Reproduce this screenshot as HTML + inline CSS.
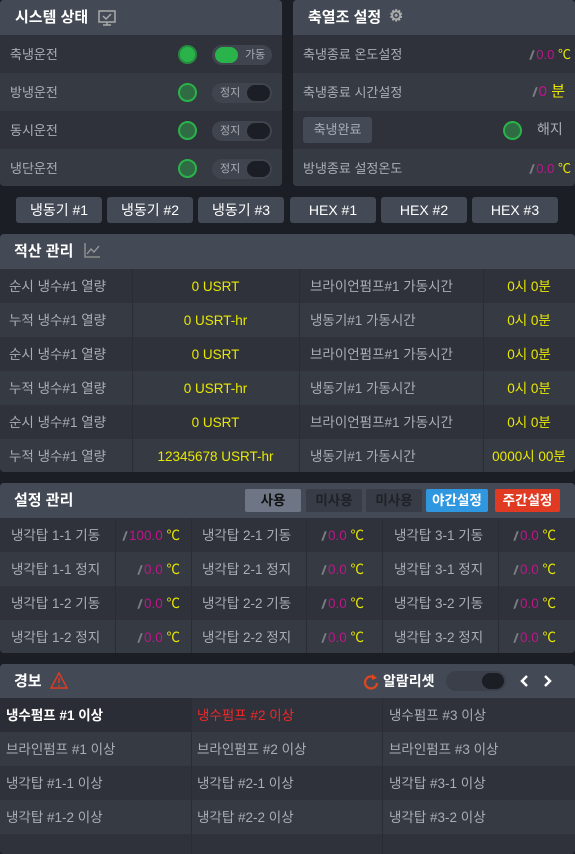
<!DOCTYPE html>
<html><head><meta charset="utf-8"><style>
*{margin:0;padding:0;box-sizing:border-box}
body{width:575px;height:846px;background:#1b1e25;font-family:"Liberation Sans","Noto Sans CJK KR",sans-serif;position:relative;overflow:hidden;color:#a9adb5;font-size:13px}
.p{position:absolute;background:#343842;border-radius:4px;overflow:hidden}
.h{position:absolute;left:0;right:0;top:0;background:#444a55;color:#fff;font-weight:bold;font-size:15px}
.r{position:absolute;left:0;right:0}
.a{background:#2f323b}.b{background:#363a43}
.t{position:absolute;white-space:nowrap;line-height:17px}
.dot{position:absolute;width:19px;height:19px;border-radius:50%;border:2px solid #2ab34a;background:#2f6b43}
.tg{position:absolute;width:60px;height:20px;border-radius:10px;background:#3f444e;font-size:11px;color:#a9adb5}
.k{position:absolute;width:23px;height:16px;border-radius:8px;top:2px}
.vl{position:absolute;top:0;bottom:0;width:1px;background:#2a2d35}
.btn{position:absolute;top:197px;width:86px;height:26px;background:#434955;border-radius:3px;color:#fff;font-size:14px;text-align:center;line-height:26px}
.y{color:#e8e800}.m{color:#c0158a}
.pen{display:inline-block;width:2px;height:10px;background:#7a7d84;transform:skewX(-20deg);margin-right:3px;vertical-align:-1px;border-radius:1px}
.sb{position:absolute;top:6px;height:23px;border-radius:2px;text-align:center;line-height:23px;font-weight:bold;font-size:13.5px}
.w{font-size:13.5px}
</style></head><body>

<div class="p" style="left:0;top:0;width:282px;height:186px">
 <div class="h" style="height:35px"><span class="t" style="left:15px;top:9px">시스템 상태</span>
 <svg style="position:absolute;left:98px;top:10px" width="18" height="16" viewBox="0 0 18 16"><rect x="1" y="1" width="16" height="11" fill="none" stroke="#aaa" stroke-width="1.5"/><path d="M5 6l3 3 5-5" stroke="#aaa" stroke-width="1.5" fill="none"/><path d="M9 12v3M5 15h8" stroke="#aaa" stroke-width="1.5"/></svg></div>
 <div class="r a" style="top:35px;height:38px"></div><div class="r b" style="top:73px;height:38px"></div><div class="r a" style="top:111px;height:38px"></div><div class="r b" style="top:149px;height:37px"></div>
 <span class="t" style="left:10px;top:46px">축냉운전</span><span class="t" style="left:10px;top:84px">방냉운전</span><span class="t" style="left:10px;top:122px">동시운전</span><span class="t" style="left:10px;top:160px">냉단운전</span>
 <div class="dot" style="left:178px;top:45px;background:#2ab34a;border-color:#27893f"></div>
 <div class="dot" style="left:178px;top:83px"></div><div class="dot" style="left:178px;top:121px"></div><div class="dot" style="left:178px;top:159px"></div>
 <div class="tg" style="left:212px;top:45px"><div class="k" style="left:3px;background:#2ab34a"></div><span class="t" style="left:33px;top:2px">가동</span></div>
 <div class="tg" style="left:212px;top:83px"><span class="t" style="left:8px;top:2px">정지</span><div class="k" style="left:35px;background:#1b1e25"></div></div>
 <div class="tg" style="left:212px;top:121px"><span class="t" style="left:8px;top:2px">정지</span><div class="k" style="left:35px;background:#1b1e25"></div></div>
 <div class="tg" style="left:212px;top:159px"><span class="t" style="left:8px;top:2px">정지</span><div class="k" style="left:35px;background:#1b1e25"></div></div>
</div>

<div class="p" style="left:293px;top:0;width:282px;height:186px">
 <div class="h" style="height:35px"><span class="t" style="left:15px;top:9px">축열조 설정</span><span class="t" style="left:96px;top:8px;color:#aaa;font-size:16px">⚙</span></div>
 <div class="r a" style="top:35px;height:38px"></div><div class="r b" style="top:73px;height:38px"></div><div class="r a" style="top:111px;height:38px"></div><div class="r b" style="top:149px;height:37px"></div>
 <span class="t" style="left:10px;top:46px">축냉종료 온도설정</span>
 <span class="t" style="right:4px;top:46px"><span class="pen"></span><span class="m">0.0</span> <span class="y">℃</span></span>
 <span class="t" style="left:10px;top:84px">축냉종료 시간설정</span>
 <span class="t" style="right:10px;top:83px;font-size:15px"><span class="pen"></span><span class="m">0</span> <span class="y">분</span></span>
 <div style="position:absolute;left:10px;top:117px;width:69px;height:26px;background:#434955;border-radius:3px;text-align:center;line-height:26px">축냉완료</div>
 <div class="dot" style="left:210px;top:121px"></div>
 <span class="t" style="left:244px;top:121px;font-size:14px">해지</span>
 <span class="t" style="left:10px;top:160px">방냉종료 설정온도</span>
 <span class="t" style="right:4px;top:160px"><span class="pen"></span><span class="m">0.0</span> <span class="y">℃</span></span>
</div>

<div class="btn" style="left:16px">냉동기 #1</div><div class="btn" style="left:107px">냉동기 #2</div><div class="btn" style="left:198px">냉동기 #3</div>
<div class="btn" style="left:290px">HEX #1</div><div class="btn" style="left:381px">HEX #2</div><div class="btn" style="left:472px">HEX #3</div>

<div class="p" style="left:0;top:234px;width:575px;height:238px">
 <div class="h" style="height:35px"><span class="t" style="left:14px;top:9px">적산 관리</span>
 <svg style="position:absolute;left:84px;top:9px" width="16" height="15" viewBox="0 0 16 15"><path d="M1 0v14h15" stroke="#999" fill="none" stroke-width="1.3"/><path d="M3 11l4-5 3 3 5-6" stroke="#999" fill="none" stroke-width="1.3"/></svg></div>
 <div class="r a" style="top:35px;height:34px"></div><div class="r b" style="top:69px;height:34px"></div><div class="r a" style="top:103px;height:34px"></div><div class="r b" style="top:137px;height:34px"></div><div class="r a" style="top:171px;height:34px"></div><div class="r b" style="top:205px;height:33px"></div>
 <div class="vl" style="left:132px;top:35px"></div><div class="vl" style="left:299px;top:35px"></div><div class="vl" style="left:483px;top:35px"></div>
</div>
<div class="w" style="position:absolute;left:0;top:269px;width:575px">
 <div style="position:relative;height:34px"><span class="t" style="left:9px;top:9px">순시 냉수#1 열량</span><span class="t y" style="left:132px;width:167px;text-align:center;top:9px">0 USRT</span><span class="t" style="left:310px;top:9px">브라이언펌프#1 가동시간</span><span class="t y" style="left:483px;width:92px;text-align:center;top:9px">0시 0분</span></div>
 <div style="position:relative;height:34px"><span class="t" style="left:9px;top:9px">누적 냉수#1 열량</span><span class="t y" style="left:132px;width:167px;text-align:center;top:9px">0 USRT-hr</span><span class="t" style="left:310px;top:9px">냉동기#1 가동시간</span><span class="t y" style="left:483px;width:92px;text-align:center;top:9px">0시 0분</span></div>
 <div style="position:relative;height:34px"><span class="t" style="left:9px;top:9px">순시 냉수#1 열량</span><span class="t y" style="left:132px;width:167px;text-align:center;top:9px">0 USRT</span><span class="t" style="left:310px;top:9px">브라이언펌프#1 가동시간</span><span class="t y" style="left:483px;width:92px;text-align:center;top:9px">0시 0분</span></div>
 <div style="position:relative;height:34px"><span class="t" style="left:9px;top:9px">누적 냉수#1 열량</span><span class="t y" style="left:132px;width:167px;text-align:center;top:9px">0 USRT-hr</span><span class="t" style="left:310px;top:9px">냉동기#1 가동시간</span><span class="t y" style="left:483px;width:92px;text-align:center;top:9px">0시 0분</span></div>
 <div style="position:relative;height:34px"><span class="t" style="left:9px;top:9px">순시 냉수#1 열량</span><span class="t y" style="left:132px;width:167px;text-align:center;top:9px">0 USRT</span><span class="t" style="left:310px;top:9px">브라이언펌프#1 가동시간</span><span class="t y" style="left:483px;width:92px;text-align:center;top:9px">0시 0분</span></div>
 <div style="position:relative;height:34px"><span class="t" style="left:9px;top:9px">누적 냉수#1 열량</span><span class="t y" style="left:132px;width:167px;text-align:center;top:9px">12345678 USRT-hr</span><span class="t" style="left:310px;top:9px">냉동기#1 가동시간</span><span class="t y" style="left:483px;width:92px;text-align:center;top:9px">0000시 00분</span></div>
</div>

<div class="p" style="left:0;top:483px;width:575px;height:170px">
 <div class="h" style="height:35px"><span class="t" style="left:14px;top:9px">설정 관리</span></div>
 <div class="sb" style="left:245px;width:56px;background:#6e7686;color:#111">사용</div>
 <div class="sb" style="left:306px;width:56px;background:#383c46;color:#1e2128">미사용</div>
 <div class="sb" style="left:366px;width:56px;background:#383c46;color:#1e2128">미사용</div>
 <div class="sb" style="left:426px;width:62px;background:#2f97e0;color:#fff">야간설정</div>
 <div class="sb" style="left:495px;width:65px;background:#e03b22;color:#fff">주간설정</div>
 <div class="r a" style="top:35px;height:34px"></div><div class="r b" style="top:69px;height:34px"></div><div class="r a" style="top:103px;height:34px"></div><div class="r b" style="top:137px;height:33px"></div>
 <div class="vl" style="left:115px;top:35px"></div><div class="vl" style="left:191px;top:35px"></div><div class="vl" style="left:306px;top:35px"></div><div class="vl" style="left:382px;top:35px"></div><div class="vl" style="left:498px;top:35px"></div>
</div>
<div class="w" style="position:absolute;left:0;top:518px;width:575px">
 <div style="position:relative;height:34px"><span class="t" style="left:11px;top:9px">냉각탑 1-1 기동</span><span class="t" style="right:395px;top:9px"><span class="pen"></span><span class="m">100.0</span> <span class="y">℃</span></span><span class="t" style="left:202px;top:9px">냉각탑 2-1 기동</span><span class="t" style="right:211px;top:9px"><span class="pen"></span><span class="m">0.0</span> <span class="y">℃</span></span><span class="t" style="left:394px;top:9px">냉각탑 3-1 기동</span><span class="t" style="right:19px;top:9px"><span class="pen"></span><span class="m">0.0</span> <span class="y">℃</span></span></div>
 <div style="position:relative;height:34px"><span class="t" style="left:11px;top:9px">냉각탑 1-1 정지</span><span class="t" style="right:395px;top:9px"><span class="pen"></span><span class="m">0.0</span> <span class="y">℃</span></span><span class="t" style="left:202px;top:9px">냉각탑 2-1 정지</span><span class="t" style="right:211px;top:9px"><span class="pen"></span><span class="m">0.0</span> <span class="y">℃</span></span><span class="t" style="left:394px;top:9px">냉각탑 3-1 정지</span><span class="t" style="right:19px;top:9px"><span class="pen"></span><span class="m">0.0</span> <span class="y">℃</span></span></div>
 <div style="position:relative;height:34px"><span class="t" style="left:11px;top:9px">냉각탑 1-2 기동</span><span class="t" style="right:395px;top:9px"><span class="pen"></span><span class="m">0.0</span> <span class="y">℃</span></span><span class="t" style="left:202px;top:9px">냉각탑 2-2 기동</span><span class="t" style="right:211px;top:9px"><span class="pen"></span><span class="m">0.0</span> <span class="y">℃</span></span><span class="t" style="left:394px;top:9px">냉각탑 3-2 기동</span><span class="t" style="right:19px;top:9px"><span class="pen"></span><span class="m">0.0</span> <span class="y">℃</span></span></div>
 <div style="position:relative;height:34px"><span class="t" style="left:11px;top:9px">냉각탑 1-2 정지</span><span class="t" style="right:395px;top:9px"><span class="pen"></span><span class="m">0.0</span> <span class="y">℃</span></span><span class="t" style="left:202px;top:9px">냉각탑 2-2 정지</span><span class="t" style="right:211px;top:9px"><span class="pen"></span><span class="m">0.0</span> <span class="y">℃</span></span><span class="t" style="left:394px;top:9px">냉각탑 3-2 정지</span><span class="t" style="right:19px;top:9px"><span class="pen"></span><span class="m">0.0</span> <span class="y">℃</span></span></div>
</div>

<div class="p" style="left:0;top:664px;width:575px;height:190px">
 <div class="h" style="height:34px"><span class="t" style="left:14px;top:9px">경보</span>
 <svg style="position:absolute;left:50px;top:8px" width="18" height="17" viewBox="0 0 18 17"><path d="M9 1L1 16h16z" fill="none" stroke="#e03b22" stroke-width="1.4"/><path d="M9 6v5M9 13v1.5" stroke="#e03b22" stroke-width="1.5"/></svg>
 <svg style="position:absolute;left:363px;top:9px" width="16" height="18" viewBox="0 0 16 18"><path d="M12 5A6 6 0 1 0 14 10" fill="none" stroke="#e0461c" stroke-width="2.2"/><path d="M9 1l5 4-5 2z" fill="#e0461c"/></svg>
 <span class="t" style="left:383px;top:9px;font-size:14px">알람리셋</span>
 <div style="position:absolute;left:446px;top:7px;width:60px;height:20px;border-radius:10px;background:#3a3f49"><div style="position:absolute;left:36px;top:2px;width:22px;height:16px;border-radius:8px;background:#1b1e25"></div></div>
 <svg style="position:absolute;left:518px;top:10px" width="36" height="14" viewBox="0 0 36 14"><path d="M9 2L4 7l5 5" fill="none" stroke="#fff" stroke-width="2.5"/><path d="M27 2l5 5-5 5" fill="none" stroke="#fff" stroke-width="2.5"/></svg>
 </div>
 <div class="r" style="top:34px;height:34px;background:#2f323b"></div><div class="r" style="top:34px;height:34px;left:0;width:191px;background:#2a2d35"></div>
 <div class="r b" style="top:68px;height:34px"></div><div class="r a" style="top:102px;height:34px"></div><div class="r b" style="top:136px;height:34px"></div><div class="r a" style="top:170px;height:20px"></div>
 <div class="vl" style="left:191px;top:34px"></div><div class="vl" style="left:382px;top:34px"></div>
</div>
<div class="w" style="position:absolute;left:0;top:698px;width:575px">
 <div style="position:relative;height:34px"><span class="t" style="left:6px;top:9px;color:#fff;font-weight:bold">냉수펌프 #1 이상</span><span class="t" style="left:197px;top:9px;color:#f02828">냉수펌프 #2 이상</span><span class="t" style="left:389px;top:9px">냉수펌프 #3 이상</span></div>
 <div style="position:relative;height:34px"><span class="t" style="left:6px;top:9px">브라인펌프 #1 이상</span><span class="t" style="left:197px;top:9px">브라인펌프 #2 이상</span><span class="t" style="left:389px;top:9px">브라인펌프 #3 이상</span></div>
 <div style="position:relative;height:34px"><span class="t" style="left:6px;top:9px">냉각탑 #1-1 이상</span><span class="t" style="left:197px;top:9px">냉각탑 #2-1 이상</span><span class="t" style="left:389px;top:9px">냉각탑 #3-1 이상</span></div>
 <div style="position:relative;height:34px"><span class="t" style="left:6px;top:9px">냉각탑 #1-2 이상</span><span class="t" style="left:197px;top:9px">냉각탑 #2-2 이상</span><span class="t" style="left:389px;top:9px">냉각탑 #3-2 이상</span></div>
</div>
</body></html>
